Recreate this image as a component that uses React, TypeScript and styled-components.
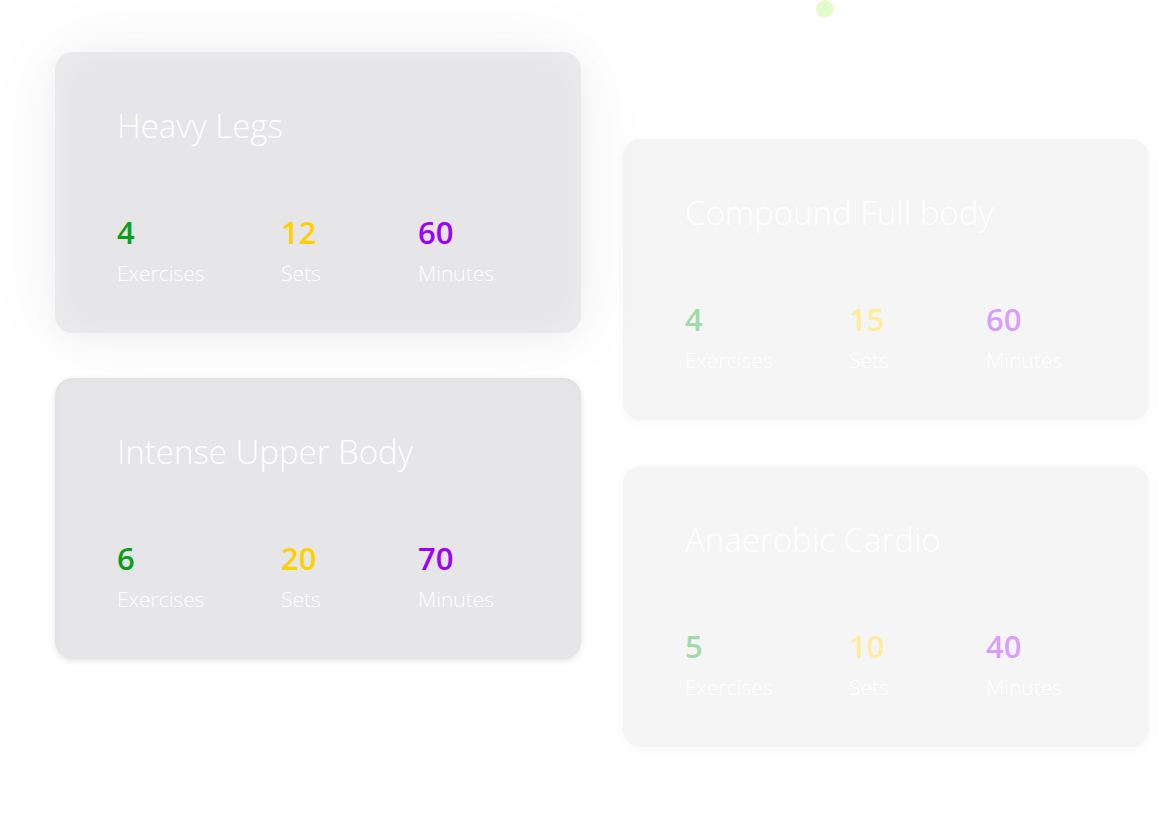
import React from "react";
import styled, { createGlobalStyle } from "styled-components";

const Global = createGlobalStyle`
  html, body { margin: 0; padding: 0; background: #ffffff; }
  body { font-family: "Open Sans", "Noto Sans", sans-serif; }
`;

const Page = styled.div`
  position: relative;
  width: 1158px;
  height: 826px;
  overflow: hidden;
  background: #ffffff;
  box-sizing: border-box;
  padding: 52px 0 0 55px;
  display: grid;
  grid-template-columns: 526px 526px;
  column-gap: 42px;
  align-items: start;
`;

const Column = styled.div<{ $offset: number; $gap: number }>`
  display: flex;
  flex-direction: column;
  gap: ${(p) => p.$gap}px;
  margin-top: ${(p) => p.$offset}px;
`;

const Dot = styled.span`
  position: absolute;
  left: 816px;
  top: 0px;
  width: 18px;
  height: 18px;
  border-radius: 50%;
  background: #e4fccd;
`;

const Card = styled.div<{ $faded?: boolean; $lifted?: boolean }>`
  box-sizing: border-box;
  height: 281px;
  border-radius: 18px;
  background: #e6e6e8;
  padding: 57px 0 0 62px;
  opacity: ${(p) => (p.$faded ? 0.38 : 1)};
  box-shadow: ${(p) =>
    p.$lifted
      ? "0 0 80px rgba(0,0,0,0.055), 0 4px 30px rgba(0,0,0,0.04), inset 0 0 40px rgba(255,255,255,0.3)"
      : p.$faded
      ? "0 2px 8px rgba(0,0,0,0.08)"
      : "0 2px 6px rgba(0,0,0,0.11), inset 0 2px 4px rgba(0,0,0,0.03)"};
`;

const Title = styled.h2`
  margin: 0;
  font-family: "Open Sans", "Noto Sans", sans-serif;
  font-weight: 300;
  font-size: 33px;
  line-height: 33px;
  color: #ffffff;
  white-space: nowrap;
`;

const Stats = styled.div`
  display: grid;
  grid-template-columns: 164px 137px auto;
  margin-top: 75px;
`;

const Stat = styled.div`
  display: flex;
  flex-direction: column;
  gap: 15px;
`;

const Value = styled.span<{ $color: string }>`
  font-family: "Open Sans", "Noto Sans", sans-serif;
  font-weight: 600;
  font-size: 31px;
  line-height: 31px;
  color: ${(p) => p.$color};
`;

const Label = styled.span`
  font-family: "Open Sans", "Noto Sans", sans-serif;
  font-weight: 300;
  font-size: 21px;
  line-height: 21px;
  color: #ffffff;
`;

const GREEN = "#08a01b";
const YELLOW = "#ffd000";
const PURPLE = "#9d00ff";

type Workout = { title: string; exercises: number; sets: number; minutes: number };

const WorkoutCard: React.FC<{ w: Workout; faded?: boolean; lifted?: boolean }> = ({ w, faded, lifted }) => (
  <Card $faded={faded} $lifted={lifted}>
    <Title>{w.title}</Title>
    <Stats>
      <Stat>
        <Value $color={GREEN}>{w.exercises}</Value>
        <Label>Exercises</Label>
      </Stat>
      <Stat>
        <Value $color={YELLOW}>{w.sets}</Value>
        <Label>Sets</Label>
      </Stat>
      <Stat>
        <Value $color={PURPLE}>{w.minutes}</Value>
        <Label>Minutes</Label>
      </Stat>
    </Stats>
  </Card>
);

export default function App() {
  return (
    <>
      <Global />
      <Page>
        <Dot />
        <Column $offset={0} $gap={45}>
          <WorkoutCard lifted w={{ title: "Heavy Legs", exercises: 4, sets: 12, minutes: 60 }} />
          <WorkoutCard w={{ title: "Intense Upper Body", exercises: 6, sets: 20, minutes: 70 }} />
        </Column>
        <Column $offset={87} $gap={46}>
          <WorkoutCard faded w={{ title: "Compound Full body", exercises: 4, sets: 15, minutes: 60 }} />
          <WorkoutCard faded w={{ title: "Anaerobic Cardio", exercises: 5, sets: 10, minutes: 40 }} />
        </Column>
      </Page>
    </>
  );
}
